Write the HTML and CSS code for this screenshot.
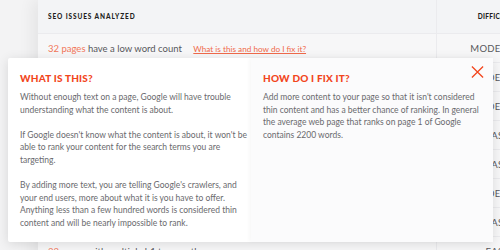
FILE: index.html
```html
<!DOCTYPE html>
<html lang="en">
<head>
  <meta charset="UTF-8">
  <meta name="viewport" content="width=device-width, initial-scale=1.0">
  <title>SEO Issues</title>
  <link rel="stylesheet" href="styles.css">
</head>
<body>
  <div class="page">
    <div class="issues">
      <div class="issues-head">
        <div class="col-name">SEO ISSUES ANALYZED</div>
        <div class="col-diff">DIFFICULTY</div>
      </div>
      <div class="issue">
        <div class="col-name"><span class="count">32 pages</span> have a low word count <a href="#" class="help-link">What is this and how do I fix it?</a></div>
        <div class="col-diff">MODERATE</div>
      </div>
      <div class="issue">
        <div class="col-name"><span class="count">14 pages</span> have duplicate titles</div>
        <div class="col-diff">MODERATE</div>
      </div>
      <div class="issue">
        <div class="col-name"><span class="count">9 pages</span> have slow load times</div>
        <div class="col-diff">MODERATE</div>
      </div>
      <div class="issue">
        <div class="col-name"><span class="count">21 pages</span> are missing meta descriptions</div>
        <div class="col-diff">EASY</div>
      </div>
      <div class="issue">
        <div class="col-name"><span class="count">6 pages</span> have broken links</div>
        <div class="col-diff">EASY</div>
      </div>
      <div class="issue">
        <div class="col-name"><span class="count">11 pages</span> have missing headings</div>
        <div class="col-diff">MODERATE</div>
      </div>
      <div class="issue">
        <div class="col-name"><span class="count">18 pages</span> have images without alt text</div>
        <div class="col-diff">EASY</div>
      </div>
      <div class="issue">
        <div class="col-name"><span class="count">32 pages</span> with multiple h1 tags on the page</div>
        <div class="col-diff">EASY</div>
      </div>
    </div>
  </div>

  <!-- popup for "What is this and how do I fix it?" -->
  <div class="help-popup">
    <div class="help-col">
      <h2>WHAT IS THIS?</h2>
      <p>Without enough text on a page, Google will have trouble understanding what the content is about.</p>
      <p>If Google doesn't know what the content is about, it won't be able to rank your content for the search terms you are targeting.</p>
      <p>By adding more text, you are telling Google's crawlers, and your end users, more about what it is you have to offer. Anything less than a few hundred words is considered thin content and will be nearly impossible to rank.</p>
    </div>
    <div class="help-col fix">
      <h2>HOW DO I FIX IT?</h2>
      <p>Add more content to your page so that it isn't considered thin content and has a better chance of ranking. In general the average web page that ranks on page 1 of Google contains 2200 words.</p>
      <a href="#" class="close">
        <svg viewBox="0 0 14 14">
          <path d="M1 1L13 13M13 1L1 13"/>
        </svg>
      </a>
    </div>
  </div>
</body>
</html>
```

FILE: styles.css
```css
body {
  margin: 0;
  padding: 0;
  width: 500px;
  height: 250px;
  overflow: hidden;
  position: relative;
  font-family: Lato, "Open Sans", sans-serif;
  background-color: #f3f3f4;
}

.page {
  padding-left: 38px;
}

.issues {
  width: 560px;
  background-color: #f7f7f8;
  box-shadow: -6px 0 14px rgba(0, 0, 0, 0.06);
}

.issues-head,
.issue {
  display: grid;
  grid-template-columns: 398px 122px;
  align-items: center;
}

.issues-head {
  height: 33px;
  background-color: #f3f4f6;
  font-size: 6.5px;
  font-weight: 900;
  letter-spacing: 0.9px;
  color: #1f1f22;
}

.issue {
  height: 28px;
  border-top: 1px solid #ebebee;
  font-size: 9.5px;
  color: #58585c;
}

.col-name {
  padding-left: 10px;
  white-space: nowrap;
}

.col-diff {
  height: 100%;
  display: flex;
  align-items: center;
  justify-content: center;
  border-left: 1px solid #ebebee;
  letter-spacing: 0.3px;
}

.count {
  color: #f2785a;
}

.help-link {
  margin-left: 9px;
  font-size: 8.2px;
  color: #f06a4a;
}

.help-popup {
  position: absolute;
  left: 8px;
  top: 58px;
  width: 485px;
  height: 184px;
  display: grid;
  grid-template-columns: 243px 242px;
  background-color: #fff;
  border-radius: 2px;
  box-shadow: 0 2px 12px rgba(0, 0, 0, 0.12);
}

.help-col {
  position: relative;
  padding: 14px 4px 0 12px;
}

.help-col.fix {
  padding-right: 8px;
  background-color: #fbfbfc;
  box-shadow: -2px 0 4px rgba(0, 0, 0, 0.03);
}

.help-col h2 {
  margin: 0 0 7px 0;
  font-size: 10px;
  line-height: 12px;
  font-weight: 900;
  letter-spacing: 0.2px;
  color: #f2461d;
}

.help-col p {
  margin: 0 0 12.6px 0;
  font-size: 8.5px;
  line-height: 12.6px;
  color: #6a6a6e;
}

.close {
  position: absolute;
  top: 5px;
  right: 9px;
  width: 13px;
  height: 14px;
}

.close svg {
  width: 13px;
  height: 14px;
  fill: none;
  stroke: #f2461d;
  stroke-width: 1.4;
}
```
